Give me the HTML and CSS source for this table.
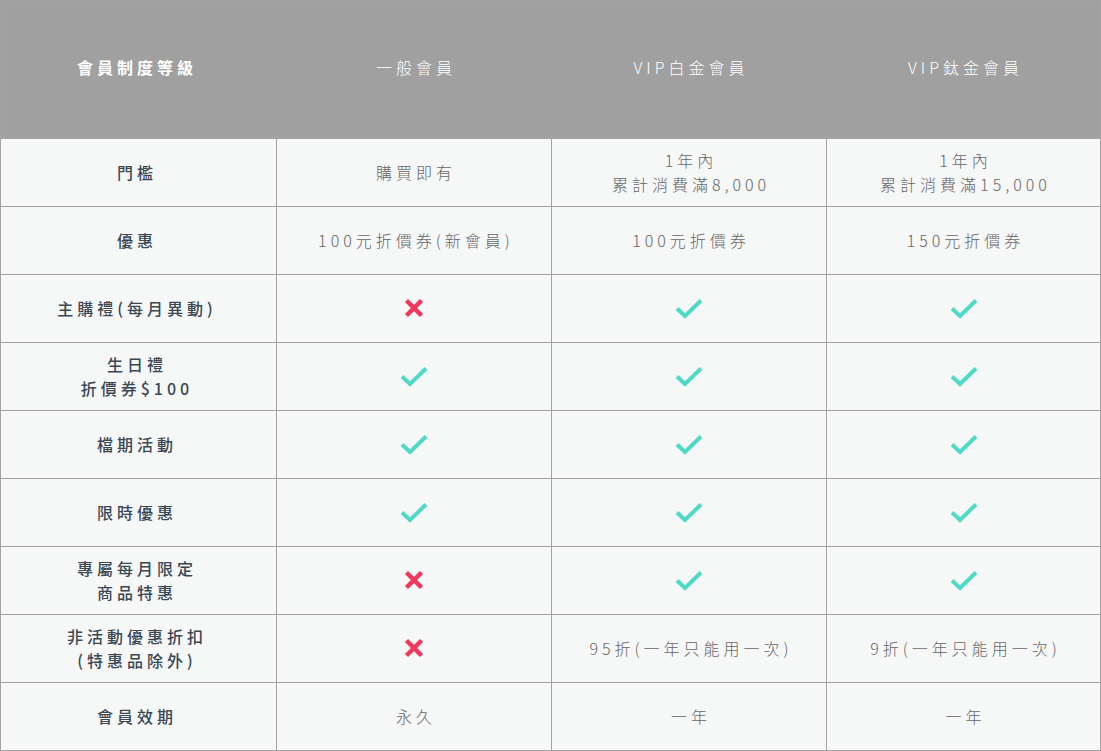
FILE: index.html
```html
<!DOCTYPE html>
<html lang="zh-Hant">
<head>
<meta charset="utf-8">
<title>會員制度等級</title>
<link rel="stylesheet" href="styles.css">
</head>
<body>
<div class="table">
  <div class="cell head label">會員制度等級</div>
  <div class="cell head">一般會員</div>
  <div class="cell head">VIP白金會員</div>
  <div class="cell head">VIP鈦金會員</div>

  <div class="cell label">門檻</div>
  <div class="cell">購買即有</div>
  <div class="cell">1年內<br>累計消費滿8,000</div>
  <div class="cell">1年內<br>累計消費滿15,000</div>

  <div class="cell label">優惠</div>
  <div class="cell">100元折價券(新會員)</div>
  <div class="cell">100元折價券</div>
  <div class="cell">150元折價券</div>

  <div class="cell label">主購禮(每月異動)</div>
  <div class="cell"><svg class="no" viewBox="0 0 20 20"><path d="M2.5 2.5L17.5 17.5M17.5 2.5L2.5 17.5"/></svg></div>
  <div class="cell"><svg class="yes" viewBox="0 0 30 22"><path d="M3 11.5L11 19L27 3.5"/></svg></div>
  <div class="cell"><svg class="yes" viewBox="0 0 30 22"><path d="M3 11.5L11 19L27 3.5"/></svg></div>

  <div class="cell label">生日禮<br>折價券$100</div>
  <div class="cell"><svg class="yes" viewBox="0 0 30 22"><path d="M3 11.5L11 19L27 3.5"/></svg></div>
  <div class="cell"><svg class="yes" viewBox="0 0 30 22"><path d="M3 11.5L11 19L27 3.5"/></svg></div>
  <div class="cell"><svg class="yes" viewBox="0 0 30 22"><path d="M3 11.5L11 19L27 3.5"/></svg></div>

  <div class="cell label">檔期活動</div>
  <div class="cell"><svg class="yes" viewBox="0 0 30 22"><path d="M3 11.5L11 19L27 3.5"/></svg></div>
  <div class="cell"><svg class="yes" viewBox="0 0 30 22"><path d="M3 11.5L11 19L27 3.5"/></svg></div>
  <div class="cell"><svg class="yes" viewBox="0 0 30 22"><path d="M3 11.5L11 19L27 3.5"/></svg></div>

  <div class="cell label">限時優惠</div>
  <div class="cell"><svg class="yes" viewBox="0 0 30 22"><path d="M3 11.5L11 19L27 3.5"/></svg></div>
  <div class="cell"><svg class="yes" viewBox="0 0 30 22"><path d="M3 11.5L11 19L27 3.5"/></svg></div>
  <div class="cell"><svg class="yes" viewBox="0 0 30 22"><path d="M3 11.5L11 19L27 3.5"/></svg></div>

  <div class="cell label">專屬每月限定<br>商品特惠</div>
  <div class="cell"><svg class="no" viewBox="0 0 20 20"><path d="M2.5 2.5L17.5 17.5M17.5 2.5L2.5 17.5"/></svg></div>
  <div class="cell"><svg class="yes" viewBox="0 0 30 22"><path d="M3 11.5L11 19L27 3.5"/></svg></div>
  <div class="cell"><svg class="yes" viewBox="0 0 30 22"><path d="M3 11.5L11 19L27 3.5"/></svg></div>

  <div class="cell label">非活動優惠折扣<br>(特惠品除外)</div>
  <div class="cell"><svg class="no" viewBox="0 0 20 20"><path d="M2.5 2.5L17.5 17.5M17.5 2.5L2.5 17.5"/></svg></div>
  <div class="cell">95折(一年只能用一次)</div>
  <div class="cell">9折(一年只能用一次)</div>

  <div class="cell label">會員效期</div>
  <div class="cell">永久</div>
  <div class="cell">一年</div>
  <div class="cell">一年</div>
</div>
</body>
</html>
```
FILE: styles.css
```css
html, body {
  margin: 0;
  padding: 0;
  background: #ffffff;
}

.table {
  display: grid;
  grid-template-columns: 275px 274px 274px 273px;
  grid-template-rows: 137px repeat(9, 67px);
  gap: 1px;
  padding: 1px;
  width: 1101px;
  box-sizing: border-box;
  background: #a3a3a3;
  font-family: "Noto Sans CJK TC", "Noto Sans", sans-serif;
}

.cell {
  display: flex;
  align-items: center;
  justify-content: center;
  text-align: center;
  box-sizing: border-box;
  padding-bottom: 2px;
  padding-left: 4px;
  background: #f6f7f7;
  color: #666666;
  font-size: 16px;
  font-weight: 300;
  letter-spacing: 4px;
  line-height: 24px;
}

.cell.label {
  color: #3b4854;
  font-weight: 500;
  padding-left: 0;
  padding-right: 3px;
}

.cell.head {
  background: #9fa09f;
  color: #ffffff;
  padding-bottom: 5px;
  margin-left: -1px;
  padding-left: 5px;
}

.cell.head.label {
  margin-left: 0;
  padding-left: 0;
  padding-right: 3px;
  color: #ffffff;
  font-weight: 700;
}

.yes {
  width: 30px;
  height: 22px;
  margin-left: -4px;
  fill: none;
  stroke: #4fd9c7;
  stroke-width: 4;
}

.no {
  width: 20px;
  height: 20px;
  margin-left: -4px;
  fill: none;
  stroke: #f2375b;
  stroke-width: 4.5;
}
```
